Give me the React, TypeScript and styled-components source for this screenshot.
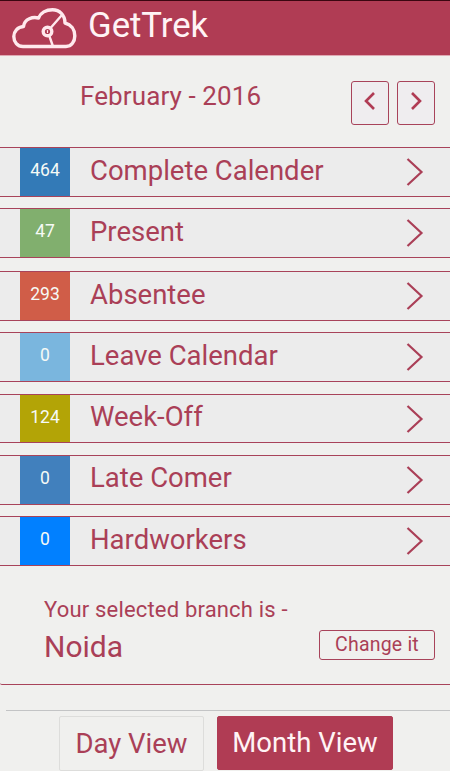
import React from "react";
import styled, { createGlobalStyle } from "styled-components";

const brand = "#b03c54";
const ink = "#aa3f57";
const line = "#a8435a";

const GlobalStyle = createGlobalStyle`
  * { box-sizing: border-box; }
  body { margin: 0; background: #f0f0ee; }
`;

const Screen = styled.main`
  display: flex;
  flex-direction: column;
  width: 450px;
  height: 771px;
  overflow: hidden;
  background: #f0f0ee;
  color: ${ink};
  font-family: Roboto, "Liberation Sans", sans-serif;
`;

const Header = styled.header`
  display: flex;
  flex: none;
  height: 56px;
  padding-left: 12px;
  background: ${brand};
  border-top: 1px solid #3a0610;
  border-bottom: 1px solid #dfa9b3;
`;

const Logo = styled.svg`
  flex: none;
  width: 66px;
  height: 44px;
  margin-top: 6px;
`;

const Title = styled.h1`
  margin: 0 0 0 10px;
  color: #fff3f5;
  font-size: 34.7px;
  font-weight: 400;
  line-height: 49px;
`;

const MonthBar = styled.section`
  display: flex;
  flex: none;
  justify-content: space-between;
  height: 91px;
  padding: 25px 15px 0 80px;
`;

const MonthLabel = styled.h2`
  margin: 0;
  font-size: 26px;
  font-weight: 400;
  line-height: 30px;
  letter-spacing: 0.1px;
`;

const Pager = styled.div`
  display: flex;
  gap: 8px;
`;

const PagerButton = styled.button`
  display: flex;
  align-items: center;
  justify-content: center;
  width: 38px;
  height: 44px;
  padding: 0 0 4px;
  background: #efedef;
  border: 1px solid ${line};
  border-radius: 3px;
`;

const List = styled.ul`
  display: flex;
  flex: none;
  flex-direction: column;
  margin: 0;
  padding: 0;
  list-style: none;
`;

const Row = styled.li<{ $gap: number; $height: number }>`
  display: flex;
  height: ${(p) => p.$height}px;
  margin-top: ${(p) => p.$gap}px;
  padding: 0 26px 0 20px;
  background: #ececec;
  border: solid ${line};
  border-width: 1px 0;
`;

const Count = styled.span<{ $color: string }>`
  width: 50px;
  background: ${(p) => p.$color};
  color: #f6faf6;
  font-size: 17.5px;
  line-height: 44px;
  text-align: center;
`;

const RowLabel = styled.span<{ $lineHeight: number }>`
  flex: 1;
  padding-left: 20px;
  font-size: 27.5px;
  line-height: ${(p) => p.$lineHeight}px;
`;

const RowArrow = styled.svg`
  width: 18px;
  height: 28px;
  margin-top: 10px;
`;

const Branch = styled.section`
  display: flex;
  flex: none;
  justify-content: space-between;
  height: 119px;
  padding: 30px 15px 0 44px;
  border-bottom: 1px solid ${line};
  border-bottom-left-radius: 2px;
`;

const BranchPrompt = styled.div`
  font-size: 22px;
  line-height: 27px;
  letter-spacing: 0.18px;
`;

const BranchName = styled.div`
  margin-top: 6px;
  font-size: 30px;
  line-height: 36px;
`;

const ChangeButton = styled.button`
  width: 116px;
  height: 30px;
  margin-top: 34px;
  padding: 0;
  background: transparent;
  border: 1px solid ${line};
  border-radius: 3px;
  color: ${ink};
  font: 19.5px/28px Roboto, "Liberation Sans", sans-serif;
  letter-spacing: 0.2px;
`;

const Footer = styled.nav`
  display: flex;
  flex: none;
  gap: 13px;
  height: 61px;
  margin-top: 25px;
  margin-left: 6px;
  padding: 5px 0 0 53px;
  border-top: 1px solid #c3c4c5;
`;

const ViewButton = styled.button<{ $active?: boolean }>`
  width: ${(p) => (p.$active ? 176 : 145)}px;
  height: ${(p) => (p.$active ? 54 : 55)}px;
  padding: 0;
  background: ${(p) => (p.$active ? brand : "transparent")};
  border: 1px solid ${(p) => (p.$active ? brand : "#dddddb")};
  border-radius: 2px;
  color: ${(p) => (p.$active ? "#fff3f5" : ink)};
  font: 27.5px/50px Roboto, "Liberation Sans", sans-serif;
`;

const rows = [
  { count: 464, label: "Complete Calender", color: "#337ab7", gap: 0, height: 50, lineHeight: 45 },
  { count: 47, label: "Present", color: "#81af6e", gap: 11, height: 50, lineHeight: 45 },
  { count: 293, label: "Absentee", color: "#d05d48", gap: 13, height: 50, lineHeight: 45 },
  { count: 0, label: "Leave Calendar", color: "#7ab6de", gap: 11, height: 50, lineHeight: 45 },
  { count: 124, label: "Week-Off", color: "#b3a406", gap: 12, height: 49, lineHeight: 43 },
  { count: 0, label: "Late Comer", color: "#4180bd", gap: 12, height: 50, lineHeight: 43 },
  { count: 0, label: "Hardworkers", color: "#0180ff", gap: 11, height: 50, lineHeight: 45 },
];

export default function App() {
  return (
    <>
      <GlobalStyle />
      <Screen>
        <Header>
          <Logo viewBox="12 7 66 44" fill="none" stroke="#ffe9ed" strokeWidth="3.4" strokeLinecap="round" strokeLinejoin="round">
            <path d="M23 46.500H66C71.500 46.500 74.800 41.500 74.800 36C74.800 29.500 71 24.500 65 23C65 15 59.500 9.800 52.500 9.800C46 9.800 40.500 13 38.500 18C33 16.500 24.500 18.500 23.500 26.500C17.500 27 13.800 31.500 13.800 36.500C13.800 42 17.500 46.500 23 46.500Z" />
            <circle cx="47.500" cy="31.500" r="4.300" />
            <path d="M51 27.500L61.500 15.500M49.500 36.500L52.500 45" strokeWidth="2.4" />
            <path d="M47.500 30.500V32.500" strokeWidth="1.200" />
          </Logo>
          <Title>GetTrek</Title>
        </Header>
        <MonthBar>
          <MonthLabel>February - 2016</MonthLabel>
          <Pager>
            <PagerButton aria-label="Previous month">
              <svg width="12" height="18" fill="none" stroke={brand} strokeWidth="2.6">
                <path d="M10 1L2 9L10 17" />
              </svg>
            </PagerButton>
            <PagerButton aria-label="Next month">
              <svg width="12" height="18" fill="none" stroke={brand} strokeWidth="2.6">
                <path d="M2 1L10 9L2 17" />
              </svg>
            </PagerButton>
          </Pager>
        </MonthBar>
        <List>
          {rows.map((row) => (
            <Row key={row.label} $gap={row.gap} $height={row.height}>
              <Count $color={row.color}>{row.count}</Count>
              <RowLabel $lineHeight={row.lineHeight}>{row.label}</RowLabel>
              <RowArrow fill="none" stroke={ink} strokeWidth="2.2">
                <path d="M1.500 1L15.500 14L1.500 27" />
              </RowArrow>
            </Row>
          ))}
        </List>
        <Branch>
          <div>
            <BranchPrompt>Your selected branch is -</BranchPrompt>
            <BranchName>Noida</BranchName>
          </div>
          <ChangeButton>Change it</ChangeButton>
        </Branch>
        <Footer>
          <ViewButton>Day View</ViewButton>
          <ViewButton $active>Month View</ViewButton>
        </Footer>
      </Screen>
    </>
  );
}
